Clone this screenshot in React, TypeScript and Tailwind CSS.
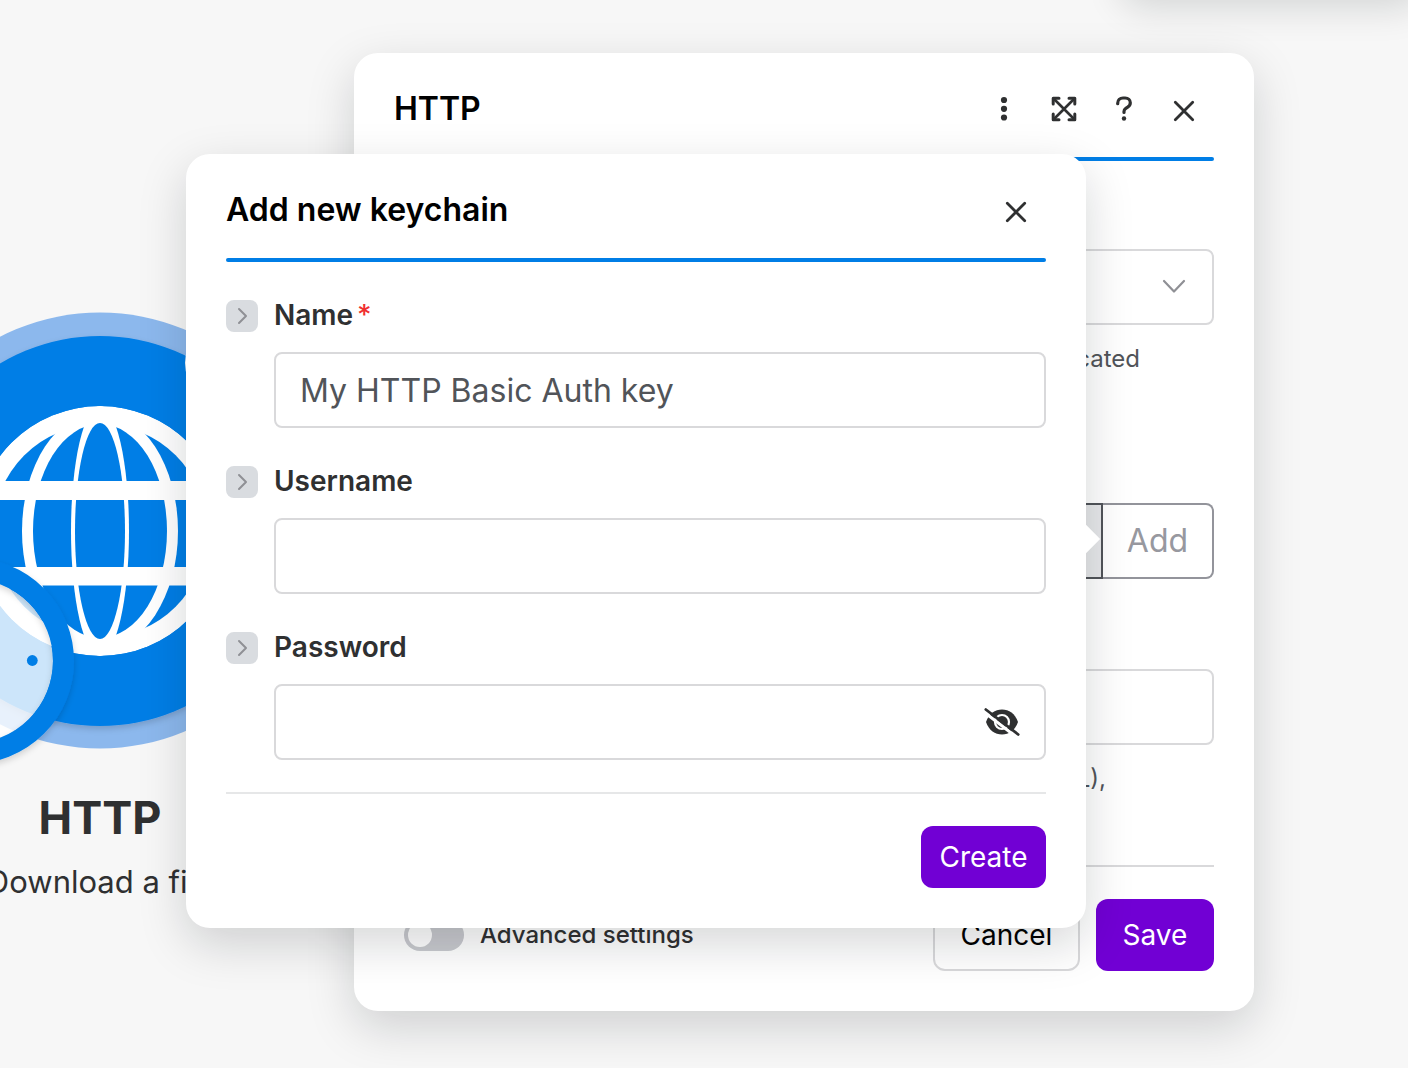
import { useState } from "react";
import type { ReactNode } from "react";

const FIELDS = [
  { id: "name", label: "Name", required: true, value: "My HTTP Basic Auth key" },
  { id: "username", label: "Username", required: false, value: "" },
  { id: "password", label: "Password", required: false, value: "", secret: true },
];

function CloseIcon() {
  return (
    <svg width="28" height="28" viewBox="0 0 28 28" fill="none" stroke="#2f3031" strokeWidth="2.8" strokeLinecap="round" aria-hidden="true">
      <path d="M5.300 7.300 22.700 24.700M22.700 7.300 5.300 24.700" />
    </svg>
  );
}

function DotsIcon() {
  return (
    <svg width="28" height="28" viewBox="0 0 28 28" fill="#2f3031" aria-hidden="true">
      <circle cx="14" cy="5" r="3.1" />
      <circle cx="14" cy="13.800" r="3.1" />
      <circle cx="14" cy="22.500" r="3.1" />
    </svg>
  );
}

function ExpandIcon() {
  return (
    <svg width="28" height="28" viewBox="0 0 28 28" fill="none" stroke="#2f3031" strokeWidth="3" strokeLinecap="round" strokeLinejoin="round" aria-hidden="true">
      <path d="M3.500 3.500 24.500 24.500M24.500 3.500 3.500 24.500" strokeWidth="2.600" />
      <path d="M3.200 9V3.200H9M19 3.200H24.800V9M24.800 19V24.800H19M9 24.800H3.200V19" />
    </svg>
  );
}

function HelpIcon() {
  return (
    <svg width="28" height="28" viewBox="0 0 28 28" fill="none" aria-hidden="true">
      <path d="M7.700 8.700V8.300C7.700 5 10 3 13 3H15.200C18.200 3 20.300 5.100 20.300 7.800C20.300 9.700 19.300 11.100 17.700 12.100L15.800 13.300C14.600 14.100 14 15 14 16.400V17.500" stroke="#2f3031" strokeWidth="3.200" strokeLinecap="round" />
      <circle cx="14" cy="23.500" r="2.200" fill="#2f3031" />
    </svg>
  );
}

function EyeOffIcon() {
  return (
    <svg width="36" height="30" viewBox="0 0 36 30" fill="none" aria-hidden="true">
      <path d="M2 15C5 6.500 11 2.500 18 2.500S31 6.500 34 15C31 23.500 25 27.500 18 27.500S5 23.500 2 15Z" fill="#2f3031" />
      <circle cx="18" cy="15" r="7" stroke="#fff" strokeWidth="2.200" />
      <path d="M18 11a4 4 0 1 1-4 4 2.500 2.500 0 0 0 4-4Z" fill="#2f3031" />
      <path d="M0 5 33 30.500" stroke="#fff" strokeWidth="3" />
      <path d="M1.800 2.500 34.200 27.500" stroke="#2f3031" strokeWidth="2.800" strokeLinecap="round" />
    </svg>
  );
}

function HttpNode() {
  return (
    <figure className="absolute -left-[140px] top-[300px] flex w-[480px] flex-col items-center">
      <svg width="480" height="480" viewBox="-140 300 480 480" aria-hidden="true">
        <defs>
          <clipPath id="globe">
            <circle cx="100" cy="531" r="125" />
          </clipPath>
          <filter id="soft" x="-20%" y="-20%" width="140%" height="140%">
            <feDropShadow dx="0" dy="3" stdDeviation="3" floodOpacity="0.160" />
          </filter>
        </defs>
        <circle cx="100" cy="530.500" r="218" fill="#8cb8ed" />
        <circle cx="100" cy="531" r="195" fill="#007ee6" filter="url(#soft)" />
        <g clipPath="url(#globe)">
          <circle cx="100" cy="531" r="125" fill="#fff" />
          <circle cx="100" cy="531" r="107" fill="#007ee6" />
          <ellipse cx="100" cy="531" rx="78" ry="119" fill="#fff" />
          <ellipse cx="100" cy="531" rx="67" ry="107" fill="#007ee6" />
          <ellipse cx="100" cy="531" rx="29" ry="125" fill="#fff" />
          <ellipse cx="100" cy="531" rx="25" ry="108" fill="#007ee6" />
          <path d="M-30 481H230V500H-30ZM-30 567H230V585.500H-30Z" fill="#fff" />
        </g>
        <circle cx="226" cy="363" r="41" fill="#fff" />
        <circle cx="-29" cy="661" r="82" fill="#fff" fillOpacity="0.800" />
        <circle cx="-29" cy="661" r="92.500" fill="none" stroke="#007ee6" strokeWidth="21" filter="url(#soft)" />
        <circle cx="32.300" cy="660.500" r="5.400" fill="#007ee6" />
      </svg>
      <figcaption className="flex flex-col items-center whitespace-nowrap text-[#2f3031]">
        <span className="mt-2 text-[45px] leading-[60px] font-bold">HTTP</span>
        <span className="mt-[14px] text-[31px] leading-10">Download a file</span>
      </figcaption>
    </figure>
  );
}

function Panel({ label, className, children }: { label: string; className: string; children: ReactNode }) {
  return (
    <section
      role="dialog"
      aria-label={label}
      className={`absolute w-[900px] rounded-3xl bg-white px-10 pb-10 shadow-[0_16px_48px_rgba(10,20,24,0.17)] ${className}`}
    >
      {children}
    </section>
  );
}

function PanelHeader({ title, children }: { title: string; children: ReactNode }) {
  return (
    <header>
      <div className="flex h-[104px] items-center justify-between pt-2">
        <h2 className="text-[32px] leading-10 font-semibold text-black">{title}</h2>
        <div className="flex items-center gap-5 pr-[10px]">{children}</div>
      </div>
      <div className="h-1 rounded-full bg-[#007ee6]" />
    </header>
  );
}

function IconButton({ label, children }: { label: string; children: ReactNode }) {
  return (
    <button type="button" aria-label={label} className="flex size-10 items-center justify-center">
      {children}
    </button>
  );
}

function HttpPanel() {
  return (
    <Panel label="HTTP" className="left-[354px] top-[53px]">
      <PanelHeader title="HTTP">
        <IconButton label="More"><DotsIcon /></IconButton>
        <IconButton label="Expand"><ExpandIcon /></IconButton>
        <IconButton label="Help"><HelpIcon /></IconButton>
        <IconButton label="Close panel"><CloseIcon /></IconButton>
      </PanelHeader>
      <div className="mt-[88px] pl-12">
        <div className="relative">
          <select aria-label="Authentication" className="h-[76px] w-full appearance-none rounded-lg border-2 border-[#d9d9db] bg-white px-6 text-[32px]">
            <option></option>
          </select>
          <svg className="pointer-events-none absolute right-7 top-7" width="24" height="18" viewBox="0 0 24 18" fill="none" stroke="#8f9095" strokeWidth="2.200" strokeLinecap="round" strokeLinejoin="round" aria-hidden="true">
            <path d="M2 4 12 14.500 22 4" />
          </svg>
        </div>
        <p className="mt-4 pr-[74px] text-right text-[24px] leading-9 text-[#515459]">authenticated</p>
        <div className="mt-[126px] flex h-[76px]">
          <select aria-label="Keychain" className="min-w-0 flex-1 appearance-none rounded-l-lg border-2 border-[#515459] bg-[#e7e8ea]">
            <option></option>
          </select>
          <button type="button" className="w-[111px] rounded-r-lg border-2 border-l-0 border-[#93949b] text-[32px] text-[#97989f]">
            Add
          </button>
        </div>
        <input aria-label="URL" className="mt-[90px] block h-[76px] w-full rounded-lg border-2 border-[#d9d9db] px-6 text-[32px]" />
        <p className="mt-4 pr-[108px] text-right text-[24px] leading-9 text-[#515459]">(URL),</p>
      </div>
      <footer className="mt-[68px] flex items-center border-t-2 border-[#d9d9db] pt-8">
        <label className="flex items-center gap-4 pl-[10px] text-[24px] font-medium text-[#2f3031]">
          <input type="checkbox" role="switch" className="peer sr-only" />
          <span className="flex h-8 w-[60px] items-center rounded-full bg-[#c9cacf] p-1">
            <span className="size-6 rounded-full bg-white" />
          </span>
          Advanced settings
        </label>
        <button type="button" className="ml-auto h-[72px] w-[147px] rounded-xl border-2 border-[#d9d9db] text-[28px] text-black">
          Cancel
        </button>
        <button type="button" className="ml-4 h-[72px] w-[118px] rounded-xl bg-[#7100d4] text-[28px] text-white">
          Save
        </button>
      </footer>
    </Panel>
  );
}

function KeychainPanel() {
  const [values, setValues] = useState<Record<string, string>>(
    Object.fromEntries(FIELDS.map((f) => [f.id, f.value])),
  );
  const [hidden, setHidden] = useState(true);
  return (
    <Panel label="Add new keychain" className="left-[186px] top-[154px]">
      <div className="absolute -right-[10px] top-[375px] size-5 rotate-45 bg-white" />
      <PanelHeader title="Add new keychain">
        <IconButton label="Close"><CloseIcon /></IconButton>
      </PanelHeader>
      <form onSubmit={(e) => e.preventDefault()}>
        <div className="mt-[38px] flex flex-col gap-[38px]">
          {FIELDS.map((f) => (
            <div key={f.id}>
              <div className="flex h-8 items-start gap-4">
                <button type="button" aria-label={`Expand ${f.label}`} className="flex size-8 items-center justify-center rounded-lg bg-[#d9dce0]">
                  <svg width="16" height="20" viewBox="0 0 16 20" fill="none" stroke="#8f9095" strokeWidth="2" strokeLinecap="round" strokeLinejoin="round" aria-hidden="true">
                    <path d="M5 3 12 10 5 17" />
                  </svg>
                </button>
                <label htmlFor={f.id} className="text-[28px] leading-[30px] font-semibold text-[#2f3031]">
                  {f.label}
                  {f.required && <span className="ml-1 font-medium text-[#f03030]">*</span>}
                </label>
              </div>
              <div className="relative mt-5 ml-12">
                <input
                  id={f.id}
                  type={f.secret && hidden ? "password" : "text"}
                  value={values[f.id]}
                  onChange={(e) => setValues({ ...values, [f.id]: e.target.value })}
                  className="block h-[76px] w-full rounded-lg border-2 border-[#d9d9db] bg-white px-6 text-[32px] text-[#515459]"
                />
                {f.secret && (
                  <button
                    type="button"
                    aria-label="Show password"
                    onClick={() => setHidden(!hidden)}
                    className="absolute inset-y-0 right-6 flex w-10 items-center justify-center"
                  >
                    <EyeOffIcon />
                  </button>
                )}
              </div>
            </div>
          ))}
        </div>
        <div className="mt-8 flex justify-end border-t-2 border-[#e6e7e8] pt-8">
          <button type="submit" className="h-[62px] w-[125px] rounded-xl bg-[#7100d4] text-[28px] text-white">
            Create
          </button>
        </div>
      </form>
    </Panel>
  );
}

export default function App() {
  return (
    <main className="relative min-h-screen overflow-hidden bg-[#f7f7f7] font-['Inter',sans-serif]">
      <HttpNode />
      <div className="absolute -right-4 -top-20 h-20 w-[304px] rounded-3xl bg-white shadow-[0_8px_36px_rgba(10,20,24,0.14)]" />
      <HttpPanel />
      <KeychainPanel />
    </main>
  );
}
